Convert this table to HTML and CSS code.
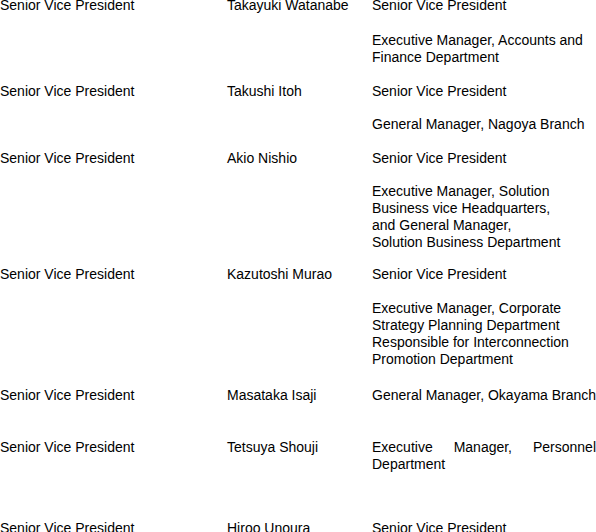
FILE: index.html
```html
<!DOCTYPE html>
<html>
<head>
<meta charset="utf-8">
<link rel="stylesheet" href="styles.css">
</head>
<body>
<div class="board">
  <div class="row r1">
    <div class="title">Senior Vice President</div>
    <div class="name">Takayuki Watanabe</div>
    <div class="role">
      <p>Senior Vice President</p>
      <p>Executive Manager, Accounts and Finance Department</p>
    </div>
  </div>
  <div class="row r2">
    <div class="title">Senior Vice President</div>
    <div class="name">Takushi Itoh</div>
    <div class="role">
      <p>Senior Vice President</p>
      <p>General Manager, Nagoya Branch</p>
    </div>
  </div>
  <div class="row r3">
    <div class="title">Senior Vice President</div>
    <div class="name">Akio Nishio</div>
    <div class="role">
      <p>Senior Vice President</p>
      <p>Executive Manager, Solution<br>Business vice Headquarters,<br>and General Manager,<br>Solution Business Department</p>
    </div>
  </div>
  <div class="row r4">
    <div class="title">Senior Vice President</div>
    <div class="name">Kazutoshi Murao</div>
    <div class="role">
      <p>Senior Vice President</p>
      <p>Executive Manager, Corporate<br>Strategy Planning Department<br>Responsible for Interconnection<br>Promotion Department</p>
    </div>
  </div>
  <div class="row r5">
    <div class="title">Senior Vice President</div>
    <div class="name">Masataka Isaji</div>
    <div class="role">
      <p class="single">General Manager, Okayama Branch</p>
    </div>
  </div>
  <div class="row r6">
    <div class="title">Senior Vice President</div>
    <div class="name">Tetsuya Shouji</div>
    <div class="role">
      <p class="justify">Executive Manager, Personnel Department</p>
    </div>
  </div>
  <div class="row r7">
    <div class="title">Senior Vice President</div>
    <div class="name">Hiroo Unoura</div>
    <div class="role">
      <p>Senior Vice President</p>
    </div>
  </div>
</div>
</body>
</html>
```
FILE: styles.css
```css
html, body {
  margin: 0;
  padding: 0;
  background: #ffffff;
  overflow: hidden;
}
body {
  font-family: "Liberation Sans", Arial, sans-serif;
  font-size: 14px;
  line-height: 17px;
  color: #000000;
}
.board {
  margin-top: -3px;
  width: 600px;
}
.row {
  display: grid;
  grid-template-columns: 227px 145px 224px;
  align-items: start;
}
.role p {
  margin: 0 0 17px 0;
}
.single {
  white-space: nowrap;
}
.justify {
  text-align: justify;
}
.r1 .role p:first-child { margin-bottom: 18px; }
.r2 .role p:first-child { margin-bottom: 16px; }
.r3 .role p:first-child { margin-bottom: 16px; }
.r3 .role p:last-child { margin-bottom: 15px; }
.r4 { padding-bottom: 2px; }
.r5 { padding-bottom: 18px; }
.r6 { padding-bottom: 30px; }
```
